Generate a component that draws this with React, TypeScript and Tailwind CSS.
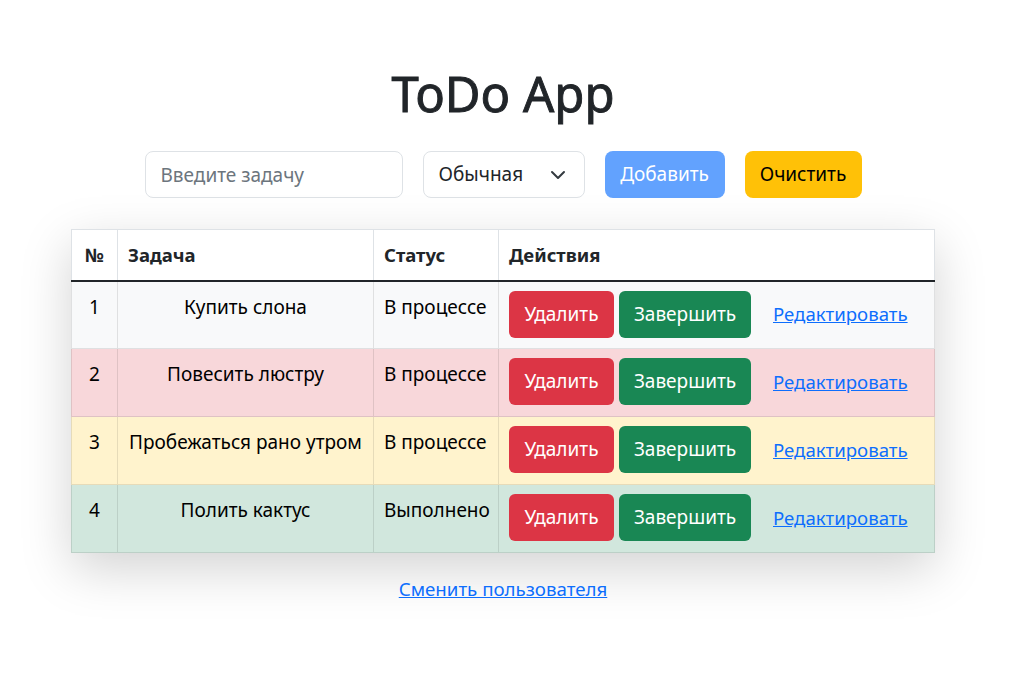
import React from "react";

const rows = [
  { n: 1, task: "Купить слона", status: "В процессе", bg: "bg-[#f8f9fa]", bd: "border-[#dfe0e1]" },
  { n: 2, task: "Повесить люстру", status: "В процессе", bg: "bg-[#f8d7da]", bd: "border-[#dfc2c4]" },
  { n: 3, task: "Пробежаться рано утром", status: "В процессе", bg: "bg-[#fff3cd]", bd: "border-[#e6dbb9]" },
  { n: 4, task: "Полить кактус", status: "Выполнено", bg: "bg-[#d1e7dd]", bd: "border-[#bcd0c7]" },
];

export default function App() {
  return (
    <div
      className="w-[1006px] min-h-[698px] bg-white text-[#212529] flex flex-col items-center"
      style={{ fontFamily: '"Noto Sans", "Open Sans", sans-serif' }}
    >
      <h1 className="mt-[64px] h-[59px] text-[49px] leading-[59px] font-normal [-webkit-text-stroke:0.9px_#212529]">
        ToDo App
      </h1>
      <div className="mt-[28px] flex items-center gap-[20px]">
        <input
          className="w-[258px] h-[47px] border border-[#dee2e6] rounded-[8px] px-[15px] text-[19px] placeholder:text-[#6c757d] outline-none"
          placeholder="Введите задачу"
        />
        <div className="w-[162px] h-[47px] border border-[#dee2e6] rounded-[8px] pl-[15px] pr-[18px] flex items-center justify-between text-[19px]">
          <span>Обычная</span>
          <svg width="16" height="16" viewBox="0 0 16 16" fill="none" stroke="#343a40" strokeWidth="2" strokeLinecap="round" strokeLinejoin="round">
            <path d="M2 5l6 6 6-6" />
          </svg>
        </div>
        <button className="w-[120px] h-[47px] rounded-[8px] bg-[#62a2fe] text-white text-[19px]">Добавить</button>
        <button className="w-[117px] h-[47px] rounded-[8px] bg-[#ffc107] text-black text-[19px]">Очистить</button>
      </div>
      <div className="mt-[31px] w-[864px] shadow-[0_1rem_3rem_rgba(0,0,0,0.175)]">
        <table className="w-full table-fixed border-collapse text-[19px]">
          <colgroup>
            <col className="w-[46px]" />
            <col className="w-[256px]" />
            <col className="w-[125px]" />
            <col />
          </colgroup>
          <thead>
            <tr className="h-[51px] bg-white text-[18.5px]">
              <th className="border border-[#dee2e6] border-b-2 border-b-[#212529] font-bold text-center">№</th>
              <th className="border border-[#dee2e6] border-b-2 border-b-[#212529] font-bold text-left px-[10px]">Задача</th>
              <th className="border border-[#dee2e6] border-b-2 border-b-[#212529] font-bold text-left px-[10px]">Статус</th>
              <th className="border border-[#dee2e6] border-b-2 border-b-[#212529] font-bold text-left px-[10px]">Действия</th>
            </tr>
          </thead>
          <tbody className="text-black">
            {rows.map((r) => (
              <tr key={r.n} className={`h-[68px] ${r.bg}`}>
                <td className={`border ${r.bd} align-top text-center pt-[11px]`}>{r.n}</td>
                <td className={`border ${r.bd} align-top text-center pt-[11px] px-[6px] whitespace-nowrap`}>{r.task}</td>
                <td className={`border ${r.bd} align-top text-left pt-[11px] pl-[10px] whitespace-nowrap`}>{r.status}</td>
                <td className={`border ${r.bd} align-top pt-[9px] pl-[10px]`}>
                  <div className="flex items-center gap-[5px]">
                    <button className="w-[105px] h-[47px] rounded-[6px] bg-[#dc3545] text-white text-[19px]">Удалить</button>
                    <button className="w-[132px] h-[47px] rounded-[6px] bg-[#198754] text-white text-[19px]">Завершить</button>
                    <a href="#" className="ml-[17px] text-[18.6px] text-[#0d6efd] underline">Редактировать</a>
                  </div>
                </td>
              </tr>
            ))}
          </tbody>
        </table>
      </div>
      <a href="#" className="mt-[22px] text-[18.7px] text-[#0d6efd] underline">Сменить пользователя</a>
    </div>
  );
}
